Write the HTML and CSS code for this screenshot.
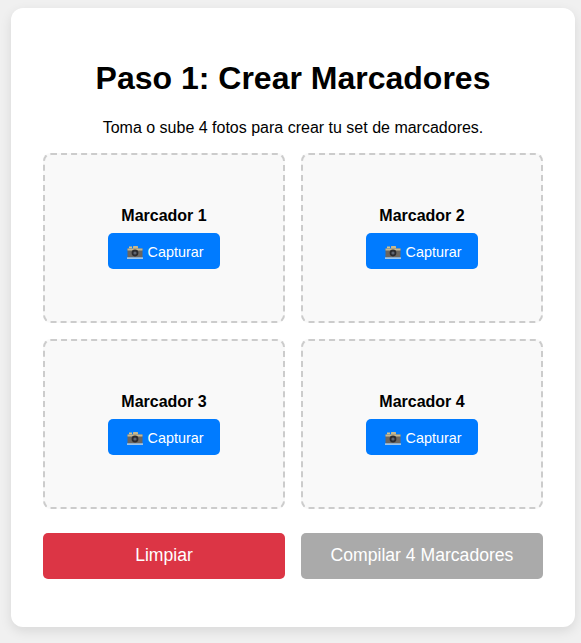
FILE: index.html
```html
<!DOCTYPE html>
<html lang="es">
<head>
    <meta charset="UTF-8">
    <meta name="viewport" content="width=device-width, initial-scale=1.0">
    <title>Crear Marcadores</title>
    <link rel="stylesheet" href="styles.css">
</head>
<body>
    <svg class="defs" width="0" height="0">
        <symbol id="camera" viewBox="0 0 16 13">
            <rect x="2" y="0.5" width="3" height="2" fill="#d8c48a"/>
            <rect x="6" y="0" width="5" height="3" rx="0.5" fill="#c9b98c"/>
            <rect x="0.5" y="2.5" width="15" height="9" fill="#6b6660"/>
            <rect x="0.5" y="2.5" width="15" height="2" fill="#c4b894"/>
            <circle cx="8" cy="7" r="3.4" fill="#2c2b2e"/>
            <circle cx="8" cy="7" r="1.6" fill="#5f6470"/>
            <rect x="0" y="11.5" width="16" height="1.2" fill="#e6e4dc"/>
        </symbol>
    </svg>

    <div class="container">
        <h1>Paso 1: Crear Marcadores</h1>
        <p class="intro">Toma o sube 4 fotos para crear tu set de marcadores.</p>

        <div class="slots">
            <div class="slot">
                <h3>Marcador 1</h3>
                <button class="capture"><svg class="icon"><use href="#camera"/></svg>Capturar</button>
            </div>
            <div class="slot">
                <h3>Marcador 2</h3>
                <button class="capture"><svg class="icon"><use href="#camera"/></svg>Capturar</button>
            </div>
            <div class="slot">
                <h3>Marcador 3</h3>
                <button class="capture"><svg class="icon"><use href="#camera"/></svg>Capturar</button>
            </div>
            <div class="slot">
                <h3>Marcador 4</h3>
                <button class="capture"><svg class="icon"><use href="#camera"/></svg>Capturar</button>
            </div>
        </div>

        <div class="actions">
            <button class="action clear">Limpiar</button>
            <button class="action compile" disabled>Compilar 4 Marcadores</button>
        </div>
    </div>
</body>
</html>
```
FILE: styles.css
```css
html, body {
    height: 100%;
}

body {
    font-family: "Liberation Sans", Arial, sans-serif;
    margin: 0;
    padding: 8px 6px 16px 11px;
    box-sizing: border-box;
    background: #f0f0f0;
    color: #000;
    overflow: hidden;
}

.defs {
    position: absolute;
}

.container {
    background: #fff;
    border-radius: 12px;
    box-shadow: 0 4px 12px rgba(0, 0, 0, 0.1);
    padding: 52px 32px 48px;
}

h1 {
    margin: 0 0 22px;
    font-size: 32px;
    line-height: 37px;
    text-align: center;
}

.intro {
    margin: 0 0 16px;
    font-size: 16px;
    line-height: 18px;
    text-align: center;
}

.slots {
    display: grid;
    grid-template-columns: 1fr 1fr;
    gap: 16px;
}

.slot {
    height: 170px;
    box-sizing: border-box;
    border: 2px dashed #ccc;
    border-radius: 8px;
    background: #f9f9f9;
    display: flex;
    flex-direction: column;
    align-items: center;
    justify-content: center;
}

.slot h3 {
    margin: 0 0 8px;
    font-size: 16px;
    line-height: 18px;
}

.capture {
    width: 112px;
    height: 36px;
    padding: 2px 0 0 2px;
    border: none;
    border-radius: 5px;
    background: #007bff;
    color: #fff;
    font-family: inherit;
    font-size: 14.4px;
    display: flex;
    align-items: center;
    justify-content: center;
}

.icon {
    width: 16px;
    height: 13px;
    margin-right: 5px;
}

.actions {
    display: grid;
    grid-template-columns: 1fr 1fr;
    gap: 16px;
    margin-top: 24px;
}

.action {
    height: 46px;
    padding: 0 0 2px;
    border: none;
    border-radius: 5px;
    color: #fff;
    font-family: inherit;
    font-size: 17.6px;
}

.clear {
    background: #dc3545;
}

.compile {
    background: #aaa;
}
```
